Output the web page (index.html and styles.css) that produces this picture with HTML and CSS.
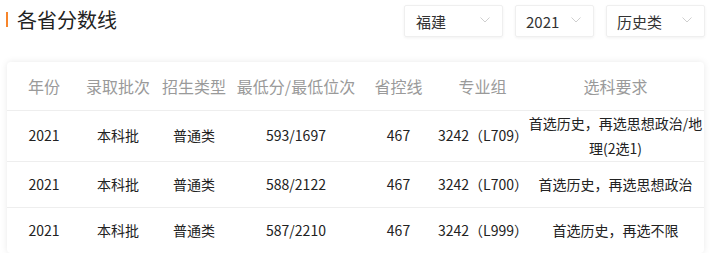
FILE: index.html
```html
<!DOCTYPE html>
<html lang="zh-CN">
<head>
<meta charset="utf-8">
<title>各省分数线</title>
<link rel="stylesheet" href="styles.css">
</head>
<body>
<div class="top">
  <h2 class="title"><span class="bar"></span>各省分数线</h2>
  <div class="filters">
    <div class="select w1"><span>福建</span><svg class="chev" width="10" height="6" viewBox="0 0 10 6"><polyline points="0.5,0.5 5,5 9.5,0.5" fill="none" stroke="#cfcfcf" stroke-width="1"/></svg></div>
    <div class="select w2"><span>2021</span><svg class="chev" width="10" height="6" viewBox="0 0 10 6"><polyline points="0.5,0.5 5,5 9.5,0.5" fill="none" stroke="#cfcfcf" stroke-width="1"/></svg></div>
    <div class="select w3"><span>历史类</span><svg class="chev" width="10" height="6" viewBox="0 0 10 6"><polyline points="0.5,0.5 5,5 9.5,0.5" fill="none" stroke="#cfcfcf" stroke-width="1"/></svg></div>
  </div>
</div>
<div class="card">
  <table class="tbl">
    <colgroup>
      <col class="c1"><col class="c2"><col class="c3"><col class="c4"><col class="c5"><col class="c6"><col class="c7">
    </colgroup>
    <thead>
      <tr><th>年份</th><th>录取批次</th><th>招生类型</th><th>最低分/最低位次</th><th>省控线</th><th>专业组</th><th>选科要求</th></tr>
    </thead>
    <tbody>
      <tr><td>2021</td><td>本科批</td><td>普通类</td><td>593/1697</td><td>467</td><td class="nw">3242（L709）</td><td>首选历史，再选思想政治/地理(2选1)</td></tr>
      <tr><td>2021</td><td>本科批</td><td>普通类</td><td>588/2122</td><td>467</td><td class="nw">3242（L700）</td><td>首选历史，再选思想政治</td></tr>
      <tr><td>2021</td><td>本科批</td><td>普通类</td><td>587/2210</td><td>467</td><td class="nw">3242（L999）</td><td>首选历史，再选不限</td></tr>
    </tbody>
  </table>
</div>
</body>
</html>
```
FILE: styles.css
```css
* { box-sizing: border-box; }
body {
  margin: 0;
  background: #fff;
  font-family: "Noto Sans CJK SC", "Microsoft YaHei", sans-serif;
  color: #333;
  text-spacing-trim: space-all;
}
.top {
  display: flex;
  justify-content: space-between;
  align-items: center;
  height: 32px;
  margin-top: 5px;
  padding: 0 5px 0 6px;
}
.title {
  display: flex;
  align-items: center;
  gap: 9px;
  margin: 0;
  font-size: 20px;
  font-weight: normal;
  color: #222;
  line-height: 28px;
  margin-top: -3px;
}
.bar {
  width: 2px;
  height: 15px;
  background: #f7852b;
}
.filters {
  display: flex;
  gap: 12px;
}
.select {
  display: flex;
  align-items: center;
  justify-content: space-between;
  height: 32px;
  padding: 0 12px 0 11px;
  border: 1px solid #efefef;
  border-radius: 2px;
  box-shadow: 0 1px 3px rgba(0,0,0,0.06);
  font-size: 15px;
  color: #333;
}
.w1 { width: 99px; }
.w2 { width: 79px; padding-left: 10px; }
.w3 { width: 99px; padding-left: 10px; }
.chev { display: block; margin-top: -2px; }
.card {
  margin: 25px 6px 0 7px;
  width: 697px;
  border-radius: 4px;
  background: #fff;
  box-shadow: 0 0 7px rgba(0,0,0,0.09);
  overflow: hidden;
}
.tbl {
  width: 697px;
  border-collapse: collapse;
  table-layout: fixed;
}
.c1 { width: 74px; }
.c2 { width: 74px; }
.c3 { width: 78px; }
.c4 { width: 126px; }
.c5 { width: 79px; }
.c6 { width: 89px; }
.c7 { width: 177px; }
.tbl th {
  height: 48px;
  padding: 0;
  font-size: 16px;
  font-weight: normal;
  color: #9a9a9a;
  text-align: center;
  white-space: nowrap;
}
.tbl thead tr { border-bottom: 1px solid #eee; }
.tbl tbody tr { border-bottom: 1px solid #eee; }
.tbl tbody tr:last-child { border-bottom: none; }
.tbl td {
  height: 46px;
  padding: 0;
  font-size: 14px;
  line-height: 25px;
  color: #222;
  text-align: center;
}
.tbl td.nw { white-space: nowrap; }
```
